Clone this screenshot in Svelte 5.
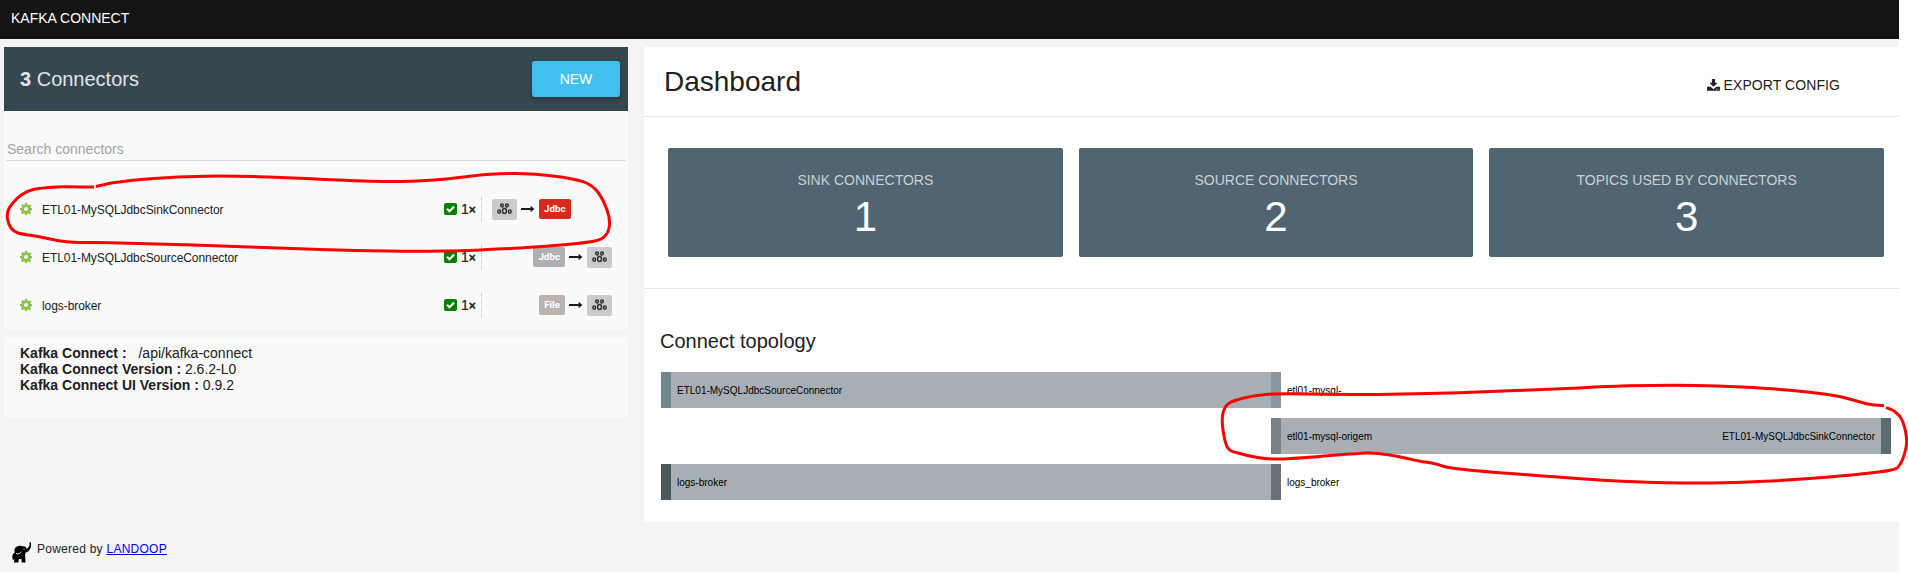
<script>
  const connectors = [
    { name: 'ETL01-MySQLJdbcSinkConnector', type: 'Jdbc', tone: 'red', sink: true },
    { name: 'ETL01-MySQLJdbcSourceConnector', type: 'Jdbc', tone: 'grey', sink: false },
    { name: 'logs-broker', type: 'File', tone: 'warm', sink: false }
  ];

  const stats = [
    { label: 'SINK CONNECTORS', value: 1 },
    { label: 'SOURCE CONNECTORS', value: 2 },
    { label: 'TOPICS USED BY CONNECTORS', value: 3 }
  ];

  const listMark = [
    [94, 187], [65, 186.7], [48, 187.5], [34, 189.3], [22, 194.5], [12, 204], [8, 211], [7.5, 219], [11, 228],
    [18, 233], [35, 236], [55, 240], [74, 242.3], [110, 242.7], [200, 245.3], [320, 249.5], [387, 251], [443, 251],
    [483, 249.8], [520, 248], [567, 244.5], [595, 241], [605, 236], [609.5, 225], [607, 210], [597, 191],
    [583, 181.7], [553, 176], [517, 173.5], [487, 174.6], [443, 179.3], [410, 181.3], [370, 181.2], [320, 179.3],
    [260, 176.7], [205, 176.2], [150, 178.7], [115, 182.5], [96, 186.5]
  ];

  const topologyMark = [
    [1884, 405.7], [1868, 404], [1836.6, 396], [1787, 390], [1742, 387], [1696.6, 385.4], [1629, 385.8],
    [1561, 388.7], [1471, 392.3], [1403, 394], [1353.5, 394.5], [1290, 393.7], [1268, 394.3], [1245, 397.7],
    [1229, 403.3], [1223, 413], [1223, 430], [1228, 448.3], [1238, 453], [1259, 457.7], [1281, 459],
    [1317, 456.7], [1367, 453], [1394, 455.7], [1419, 461], [1435, 463.7], [1457, 468.7], [1539, 475.7],
    [1629, 481.5], [1710, 483], [1764, 481.3], [1832, 476.7], [1889, 470.5], [1900, 464.3], [1905.5, 450],
    [1906.5, 438], [1902, 420], [1895, 411.7], [1886, 407.5]
  ];

  // Smooths a list of points into a cubic path.
  function smooth(p) {
    let d = `M${p[0]}`;
    for (let i = 0; i < p.length - 1; i++) {
      const a = p[i - 1] ?? p[i];
      const b = p[i];
      const c = p[i + 1];
      const e = p[i + 2] ?? c;
      const k = 6.5;
      d += `C${b[0] + (c[0] - a[0]) / k},${b[1] + (c[1] - a[1]) / k} ${c[0] - (e[0] - b[0]) / k},${c[1] - (e[1] - b[1]) / k} ${c[0]},${c[1]}`;
    }
    return d;
  }
</script>

{#snippet kafka()}
  <span class="kafka">
    <svg width="15" height="12" viewBox="0 0 15 12" fill="none" stroke="#333" stroke-width="1.5">
      <path d="M5.500 4l1 1.500M9.500 4l-1 1.500" stroke-width="1" />
      <circle cx="5" cy="2.300" r="1.400" />
      <circle cx="10" cy="2.300" r="1.400" />
      <ellipse cx="7.500" cy="8" rx="2" ry="2.500" />
      <ellipse cx="2.200" cy="8.600" rx="1.400" ry="1.700" />
      <ellipse cx="12.800" cy="8.600" rx="1.400" ry="1.700" />
    </svg>
  </span>
{/snippet}

{#snippet arrow()}
  <svg class="arrow" width="14" height="8" viewBox="0 0 14 8">
    <path d="M0 3.1h9.6V.8L13.500 4 9.600 7.200V4.900H0z" fill="#1c1c1c" />
  </svg>
{/snippet}

<div class="page">
  <header class="topbar">KAFKA CONNECT</header>
  <div class="columns">
    <aside>
      <section class="list">
        <div class="list-head">
          <h2><b>3</b> Connectors</h2>
          <button>NEW</button>
        </div>
        <div class="search">Search connectors</div>
        <ul>
          {#each connectors as c}
            <li>
              <svg class="gear" width="12" height="12" viewBox="0 0 24 24">
                <path fill="#8bc34a" fill-rule="evenodd" d="M9.8 0h4.4l.7 3.4 1.9.8L19.700 2.300l3 3-1.900 2.900.8 1.900L24 10.700v3.800l-2.800.5-.8 1.700 1.900 2.800-2.900 2.900-2.800-1.900-1.800.8-.6 2.700h-4l-.7-2.800-1.800-.8-2.900 2-2.900-2.900 1.900-2.900-.8-1.800L0 14.200v-4l3.300-.7.8-1.800L2.200 4.900l2.900-2.800L7.800 4l1.400-.6zM12 8a4 4 0 1 0 0 8 4 4 0 0 0 0-8z" />
              </svg>
              <span class="name">{c.name}</span>
              <span class="tasks">
                <svg width="13" height="12" viewBox="0 0 13 12">
                  <rect width="13" height="12" rx="2" fill="#008000" />
                  <path d="M2.900 5.800l2.500 2.500 4.700-4.700" fill="none" stroke="#fff" stroke-width="2.200" />
                </svg>
                <span class="count">1<b>×</b></span>
              </span>
              <span class="flow" class:sink={c.sink}>
                {#if c.sink}
                  {@render kafka()}{@render arrow()}<span class="tag {c.tone}">{c.type}</span>
                {:else}
                  <span class="tag {c.tone}">{c.type}</span>{@render arrow()}{@render kafka()}
                {/if}
              </span>
            </li>
          {/each}
        </ul>
      </section>
      <section class="info">
        <div><b>Kafka Connect :</b> <span class="url">/api/kafka-connect</span></div>
        <div><b>Kafka Connect Version :</b> 2.6.2-L0</div>
        <div><b>Kafka Connect UI Version :</b> 0.9.2</div>
      </section>
      <footer>
        <svg width="20" height="21" viewBox="0 0 20 21">
          <path d="M17.600 0l1.400.5c.3 3-.1 6.500-2.300 8.600-1 .9-2.100 1.200-3 1.400l-.7 2.500.6 7.500H9.800l-.5-3.800c-.8.400-1.500.4-2.300 0L6.300 20.500H2L2.400 17 .8 18.300.3 14.500c.1-2 1-3.200 2.500-4C1.800 7.500 3 4.800 6 4.300c2-.6 3.400-.6 4.800.2 2-.6 3.300.4 3.600 2.200 2.700-.7 3.300-3.200 3.200-5.200z" />
          <path d="M4 11.500c2 .8 4.300.4 5.300-1.800M11.500 7.300h1" stroke="#f4f4f4" stroke-width=".9" fill="none" />
        </svg>
        <span>Powered by <a href="#landoop">LANDOOP</a></span>
      </footer>
    </aside>

    <main>
      <div class="dash-head">
        <h1>Dashboard</h1>
        <span class="export">
          <svg width="13" height="12" viewBox="0 0 14 13">
            <path fill="#212121" d="M5.300 0h3.400v4H11.500L7 8.300 2.500 4h2.800zM0 8.300h3.900L7 11l3.100-2.700H14V12.700H0z" />
            <path d="M9.600 11.200h.9M11.500 11.200h.9" stroke="#fff" stroke-width=".9" />
          </svg>
          EXPORT CONFIG
        </span>
      </div>
      <div class="stats">
        {#each stats as s}
          <div class="stat">
            <div class="label">{s.label}</div>
            <div class="value">{s.value}</div>
          </div>
        {/each}
      </div>
      <div class="topology">
        <h3>Connect topology</h3>
        <svg width="1231" height="128" viewBox="0 0 1231 128">
          <g fill="#a7afb5">
            <rect x="10" width="601" height="36" />
            <rect x="620" y="46" width="601" height="36" />
            <rect x="10" y="92" width="601" height="36" />
          </g>
          <rect width="10" height="36" fill="#72868f" />
          <rect x="610" width="10" height="36" fill="#8896a0" />
          <rect x="610" y="46" width="10" height="36" fill="#78818a" />
          <rect x="1220" y="46" width="10" height="36" fill="#5f6c73" />
          <rect y="92" width="10" height="36" fill="#4d585e" />
          <rect x="610" y="92" width="10" height="36" fill="#697178" />
          <text x="16" y="22">ETL01-MySQLJdbcSourceConnector</text>
          <text x="626" y="22">etl01-mysql-</text>
          <text x="626" y="68">etl01-mysql-origem</text>
          <text x="1214" y="68" text-anchor="end">ETL01-MySQLJdbcSinkConnector</text>
          <text x="16" y="114">logs-broker</text>
          <text x="626" y="114">logs_broker</text>
        </svg>
      </div>
    </main>
  </div>
  <svg class="marks" width="1908" height="572" viewBox="0 0 1908 572">
    <path d={smooth(listMark)} />
    <path d={smooth(topologyMark)} />
  </svg>
</div>

<style>
  :global(body) {
    background: #fff;
    overflow: hidden;
  }
  .page {
    position: relative;
    width: 1899px;
    height: 572px;
    background: #f4f4f4;
    color: #212121;
    font: 14px/16px "Liberation Sans", Arial, sans-serif;
  }
  .topbar {
    height: 39px;
    box-sizing: border-box;
    padding: 10px 11px;
    background: #141414;
    color: #fff;
  }
  .columns {
    display: flex;
    gap: 16px;
    padding: 8px 0 0 4px;
  }
  aside {
    width: 624px;
    flex: none;
  }
  .list {
    height: 282px;
    background: #fafafa;
  }
  .list-head {
    display: flex;
    align-items: center;
    justify-content: space-between;
    height: 64px;
    box-sizing: border-box;
    padding: 0 8px 0 16px;
    background: #37474f;
  }
  h1, h2, h3 {
    margin: 0;
    font-weight: 400;
  }
  h2 {
    color: #e1e4e5;
    font-size: 20px;
    line-height: 24px;
  }
  button {
    width: 88px;
    height: 36px;
    padding: 0;
    border: 0;
    border-radius: 3px;
    background: #41bfef;
    box-shadow: 0 2px 5px rgba(0, 0, 0, 0.26);
    color: #fff;
    font: 14px/36px "Liberation Sans", Arial, sans-serif;
  }
  .search {
    margin: 30px 2px 0;
    padding: 0 0 3px 1px;
    height: 16px;
    border-bottom: 1px solid #dadbdb;
    color: #a3a3a3;
  }
  ul {
    list-style: none;
    margin: 0;
    padding: 24px 16px 0;
  }
  li {
    display: flex;
    align-items: center;
    height: 48px;
  }
  .gear {
    margin-right: 10px;
  }
  .name {
    flex: 1;
    padding-top: 1px;
    font-size: 12px;
    letter-spacing: -0.07px;
  }
  .tasks {
    display: flex;
    align-items: center;
    gap: 4px;
    width: 37px;
    height: 25px;
    border-right: 1px dotted #bbb;
  }
  .count {
    -webkit-text-stroke: 0.2px #212121;
  }
  .tasks b {
    font-size: 12px;
  }
  .flow {
    display: flex;
    align-items: center;
    justify-content: flex-end;
    width: 130px;
  }
  .flow.sink {
    justify-content: flex-start;
    box-sizing: border-box;
    padding-left: 10px;
  }
  .arrow {
    margin: 0 4px;
  }
  .kafka {
    display: flex;
    align-items: center;
    justify-content: center;
    width: 25px;
    height: 21px;
    border-radius: 2px;
    background: #cbcbcb;
  }
  .tag {
    height: 20px;
    padding: 0 5px;
    border-radius: 2px;
    color: #fff;
    font: 700 9.8px/20px Roboto, sans-serif;
  }
  .red { background: #d9291f; }
  .grey { background: #b0b0b0; }
  .warm { background: #bcb2b0; }
  .info {
    height: 80px;
    box-sizing: border-box;
    margin-top: 8px;
    padding: 8px 16px;
    background: #fafafa;
  }
  .url {
    margin-left: 8px;
  }
  footer {
    display: flex;
    gap: 5px;
    padding: 125px 0 0 8px;
    font-size: 12px;
    line-height: 14px;
    letter-spacing: 0.25px;
  }
  a {
    color: #0000ee;
  }
  main {
    width: 1255px;
    height: 475px;
    background: #fff;
  }
  .dash-head {
    display: flex;
    justify-content: space-between;
    height: 69px;
    border-bottom: 1px solid #e6e6e6;
  }
  h1 {
    padding: 19px 0 0 20px;
    font-size: 28px;
    line-height: 32px;
  }
  .export {
    display: flex;
    align-items: center;
    gap: 4px;
    height: 16px;
    padding: 30px 59px 0 0;
    letter-spacing: 0.08px;
  }
  .stats {
    display: grid;
    grid-template-columns: repeat(3, 1fr);
    gap: 16px;
    height: 172px;
    box-sizing: border-box;
    padding: 31px 15px 31px 24px;
    border-bottom: 1px solid #e6e6e6;
  }
  .stat {
    height: 109px;
    box-sizing: border-box;
    padding-top: 24px;
    border-radius: 2px;
    background: #4f6571;
    color: #fff;
    text-align: center;
  }
  .label {
    color: #cad1d5;
  }
  .value {
    margin-top: 5px;
    font-size: 42px;
    line-height: 48px;
  }
  .topology {
    padding: 40px 0 0 17px;
  }
  h3 {
    margin: 0 0 19px -1px;
    font-size: 20px;
    line-height: 24px;
  }
  .topology svg {
    display: block;
  }
  text {
    fill: #000;
    font-size: 10px;
  }
  .marks {
    position: absolute;
    top: 0;
    left: 0;
    fill: none;
    stroke: #ff0000;
    stroke-width: 3;
    pointer-events: none;
  }
</style>
